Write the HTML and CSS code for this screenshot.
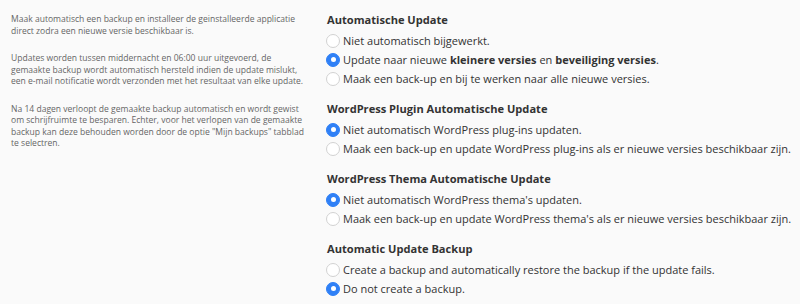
FILE: index.html
```html
<!DOCTYPE html>
<html lang="nl">
<head>
<meta charset="utf-8">
<title>Automatische Update</title>
<link rel="stylesheet" href="styles.css">
</head>
<body>
<div class="page">
  <aside class="info">
    <p>Maak automatisch een backup en installeer de geinstalleerde applicatie direct zodra een nieuwe versie beschikbaar is.</p>
    <p>Updates worden tussen middernacht en 06:00 uur uitgevoerd, de gemaakte backup wordt automatisch hersteld indien de update mislukt, een e-mail notificatie wordt verzonden met het resultaat van elke update.</p>
    <p>Na 14 dagen verloopt de gemaakte backup automatisch en wordt gewist om schrijfruimte te besparen. Echter, voor het verlopen van de gemaakte backup kan deze behouden worden door de optie "Mijn backups" tabblad te selectren.</p>
  </aside>
  <main class="settings">
    <section class="group">
      <h3 class="group-title">Automatische Update</h3>
      <label class="option"><span class="radio"></span>Niet automatisch bijgewerkt.</label>
      <label class="option"><span class="radio checked"></span>Update naar nieuwe&nbsp;<b>kleinere versies</b>&nbsp;en&nbsp;<b>beveiliging versies</b>.</label>
      <label class="option"><span class="radio"></span>Maak een back-up en bij te werken naar alle nieuwe versies.</label>
    </section>
    <section class="group">
      <h3 class="group-title">WordPress Plugin Automatische Update</h3>
      <label class="option"><span class="radio checked"></span>Niet automatisch WordPress plug-ins updaten.</label>
      <label class="option"><span class="radio"></span>Maak een back-up en update WordPress plug-ins als er nieuwe versies beschikbaar zijn.</label>
    </section>
    <section class="group">
      <h3 class="group-title">WordPress Thema Automatische Update</h3>
      <label class="option"><span class="radio checked"></span>Niet automatisch WordPress thema's updaten.</label>
      <label class="option"><span class="radio"></span>Maak een back-up en update WordPress thema's als er nieuwe versies beschikbaar zijn.</label>
    </section>
    <section class="group">
      <h3 class="group-title">Automatic Update Backup</h3>
      <label class="option"><span class="radio"></span>Create a backup and automatically restore the backup if the update fails.</label>
      <label class="option"><span class="radio checked"></span>Do not create a backup.</label>
    </section>
  </main>
</div>
</body>
</html>
```
FILE: styles.css
```css
* { box-sizing: border-box; }
html, body { margin: 0; padding: 0; }
body {
  background: #fafafa;
  font-family: "Open Sans", "Noto Sans", sans-serif;
  color: #333;
  width: 800px;
  height: 304px;
  overflow: hidden;
}
.page {
  display: flex;
  padding: 10px 0 0 0;
}
.info {
  width: 311px;
  flex: none;
  padding: 4px 0 0 11px;
  color: #666;
  font-size: 8.55px;
  line-height: 11.5px;
}
.info p { margin: 0 0 16px 0; width: 297px; }
.settings {
  margin-left: 15px;
  display: flex;
  flex-direction: column;
  gap: 11px;
}
.group { display: flex; flex-direction: column; }
.group-title {
  margin: 0 0 2px 1px;
  font-size: 11.1px;
  line-height: 19px;
  font-weight: 700;
  color: #333;
}
.option {
  display: flex;
  align-items: center;
  font-size: 11px;
  line-height: 19px;
  white-space: nowrap;
}
.option b { font-weight: 700; }
.radio {
  width: 14px;
  height: 14px;
  border-radius: 50%;
  border: 1px solid #d2d2d2;
  background: #fff;
  margin-right: 3px;
  flex: none;
  position: relative;
}
.radio.checked {
  background: #2f80f6;
  border-color: #2f80f6;
}
.radio.checked::after {
  content: "";
  position: absolute;
  left: 50%;
  top: 50%;
  width: 5px;
  height: 5px;
  margin: -2.5px 0 0 -2.5px;
  border-radius: 50%;
  background: #fff;
}
```
